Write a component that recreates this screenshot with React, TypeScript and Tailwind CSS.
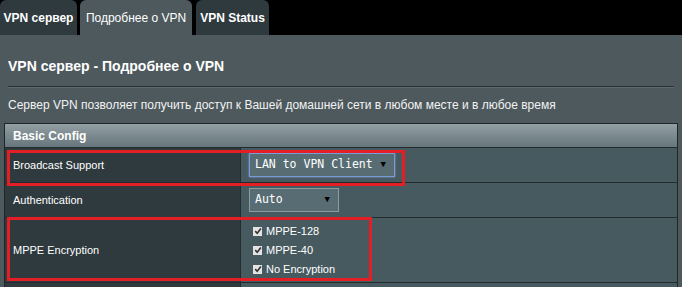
import type { ReactNode } from 'react'

const FONT = "font-['Liberation_Sans',Arial,sans-serif]"
const MONO = "font-['DejaVu_Sans_Mono','Liberation_Mono',monospace]"

function Tab({ label, active, className }: { label: string; active?: boolean; className: string }) {
  return (
    <div
      className={`flex h-[35px] items-center justify-center rounded-t-[6px] text-[12px] text-white ${
        active ? 'bg-[#4d595d]' : 'bg-[#2f3a3e] font-bold'
      } ${className}`}
    >
      {label}
    </div>
  )
}

function Select({ value, width, focused }: { value: string; width: string; focused?: boolean }) {
  return (
    <div
      className={`flex h-[24px] items-center justify-between bg-[#576d73] pl-[5px] pr-[8px] text-[11.5px] text-white ${MONO} ${width} ${
        focused ? 'border border-[#7b9bd6] shadow-[0_0_2px_#7b9bd6]' : 'border border-[#8d9a9e]'
      }`}
    >
      <span>{value}</span>
      <span className="text-[9px] text-black">▼</span>
    </div>
  )
}

function Check({ label }: { label: string }) {
  return (
    <div className="flex h-[19px] items-center gap-[4px]">
      <span className="grid h-[9px] w-[9px] place-items-center bg-[#e4e4e4]">
        <svg viewBox="0 0 10 10" className="h-[8px] w-[8px]">
          <path d="M1.5 5.2 L4 7.8 L8.6 1.8" fill="none" stroke="#333" strokeWidth="2" />
        </svg>
      </span>
      <span>{label}</span>
    </div>
  )
}

function Row({ label, children, h }: { label: string; children: ReactNode; h: string }) {
  return (
    <div className={`flex border-t border-[#222b2e] ${h}`}>
      <div className="flex w-[236px] items-center border-r border-[#222b2e] bg-[#2f3a3e] pl-[8px]">{label}</div>
      <div className="flex flex-1 items-center bg-[#475a5f] pl-[8px]">{children}</div>
    </div>
  )
}

export default function App() {
  return (
    <div className={`relative h-[287px] w-[682px] overflow-hidden bg-black text-[11px] text-white ${FONT}`}>
      {/* tabs */}
      <div className="flex h-[35px]">
        <Tab label="VPN сервер" className="w-[77px]" />
        <Tab label="Подробнее о VPN" active className="ml-[3px] w-[112px]" />
        <Tab label="VPN Status" className="ml-[4px] w-[73px]" />
      </div>

      <div className="h-[252px] bg-[#4d595d] px-[4px]">
        <div className="pl-[4px] pr-[4px]">
          <div className="pt-[22px] text-[14px] font-bold leading-[18px]">VPN сервер - Подробнее о VPN</div>
          <div className="mt-[11px] h-px bg-[#2a3337] shadow-[0_1px_0_#5c686c]" />
          <div className="mt-[10px] text-[12px] leading-[16px] text-[#f2f2f2]">
            Сервер VPN позволяет получить доступ к Вашей домашней сети в любом месте и в любое время
          </div>
        </div>

        {/* table */}
        <div className="mt-[10px] w-[674px] border-x border-t border-[#1e2629]">
          <div className="flex h-[23px] items-center bg-gradient-to-b from-[#929fa4] to-[#67767c] pl-[8px] text-[12px] font-bold">
            Basic Config
          </div>
          <Row label="Broadcast Support" h="h-[35px]">
            <Select value="LAN to VPN Client" width="w-[146px]" focused />
          </Row>
          <Row label="Authentication" h="h-[35px]">
            <Select value="Auto" width="w-[90px]" />
          </Row>
          <Row label="MPPE Encryption" h="h-[65px]">
            <div className="flex flex-col pl-[4px]">
              <Check label="MPPE-128" />
              <Check label="MPPE-40" />
              <Check label="No Encryption" />
            </div>
          </Row>
          <Row label="" h="h-[20px]">
            <span />
          </Row>
        </div>
      </div>

      {/* red highlight frames */}
      <div className="pointer-events-none absolute left-[7px] top-[150px] h-[36px] w-[398px] border-[3px] border-[#e31e24]" />
      <div className="pointer-events-none absolute left-[7px] top-[217px] h-[64px] w-[365px] border-[3px] border-[#e31e24]" />
    </div>
  )
}
